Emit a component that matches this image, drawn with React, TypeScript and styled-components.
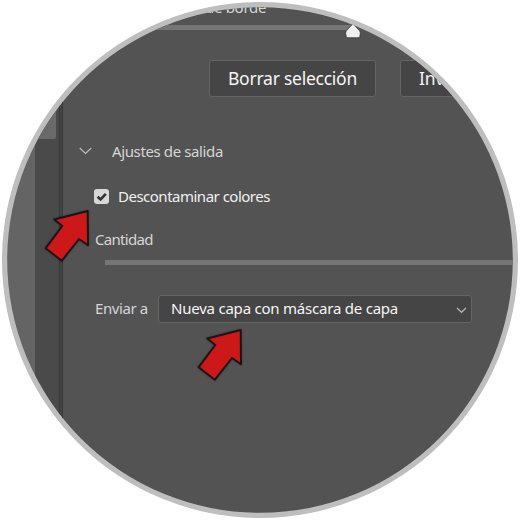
import React from 'react'
import styled, { createGlobalStyle } from 'styled-components'

const GlobalStyle = createGlobalStyle`
  * {
    box-sizing: border-box;
  }

  body {
    margin: 0;
    background: #ffffff;
    font-family: 'Noto Sans', 'Open Sans', sans-serif;
  }
`

const Page = styled.main`
  width: 520px;
  height: 520px;
  padding: 2px;
  overflow: hidden;
`

const Ring = styled.div`
  width: 516px;
  height: 516px;
  border-radius: 50%;
  background: #bebebe;
`

const Lens = styled.div`
  position: relative;
  display: flex;
  height: 516px;
  overflow: hidden;
  clip-path: circle(252.8px);
`

const Canvas = styled.div`
  flex: none;
  width: 33px;
  background: #646464;
`

const Scrollbar = styled.div`
  flex: none;
  width: 24px;
  padding-right: 3px;
  background: #4a4a4a;
`

const ScrollThumb = styled.div`
  height: 137px;
  border-radius: 0 0 2px 2px;
  background: #6a6a6a;
`

const Divider = styled.div`
  flex: none;
  width: 4px;
  border: solid #383838;
  border-width: 0 1px;
  background: #444444;
`

const Panel = styled.section`
  flex: none;
  width: 455px;
  display: flex;
  flex-direction: column;
  background: #535353;
`

const Text = styled.span<{ size?: number; spacing?: number; color?: string }>`
  color: ${({ color }) => color || '#d6d6d6'};
  font-size: ${({ size }) => size || 15}px;
  line-height: 20px;
  letter-spacing: ${({ spacing }) => spacing || 0}px;
  white-space: nowrap;
`

const EdgeLabel = styled.div`
  display: flex;
  height: 23px;
  padding-left: 142px;

  ${Text} {
    margin-top: -5px;
  }
`

const Track = styled.div<{ indent?: number; length?: number }>`
  flex: none;
  position: relative;
  height: 5px;
  width: ${({ length }) => (length ? `${length}px` : 'auto')};
  margin-left: ${({ indent }) => indent || 0}px;
  background: #757575;
`

const Handle = styled.svg`
  position: absolute;
  top: -2px;
  right: -8px;
`

const Buttons = styled.div`
  display: flex;
  gap: 24px;
  margin: 30px 0 0 146px;
`

const Button = styled.button`
  flex: none;
  width: 167px;
  height: 37px;
  padding: 0 0 0 18px;
  border: 1px solid #656565;
  border-radius: 3px;
  background: #454545;
  font-family: inherit;
  text-align: left;
`

const SectionHeader = styled.div`
  display: flex;
  align-items: center;
  gap: 20px;
  height: 20px;
  margin: 44px 0 0 16px;
`

const CheckRow = styled.label`
  display: flex;
  align-items: center;
  gap: 9px;
  height: 20px;
  margin: 25px 0 0 31px;
`

const Checkbox = styled.span`
  display: flex;
  width: 15px;
  height: 15px;
  border-radius: 3px;
  background: #d8d8d8;
`

const AmountLabel = styled.div`
  display: flex;
  height: 20px;
  margin: 23px 0 11px 32px;
`

const OutputRow = styled.div`
  display: flex;
  align-items: center;
  height: 28px;
  margin: 30px 0 0 32px;

  ${Text} {
    margin-top: -2px;
  }
`

const OutputLabel = styled.div`
  display: flex;
  width: 63px;
`

const Select = styled.div`
  display: flex;
  align-items: center;
  justify-content: space-between;
  width: 314px;
  height: 28px;
  padding: 0 4px 0 12px;
  border: 1px solid #656565;
  border-radius: 3px;
  background: #454545;

  svg {
    margin-top: 2px;
  }
`

const Pointer = styled.svg<{ x: number; y: number }>`
  position: absolute;
  left: ${({ x }) => x}px;
  top: ${({ y }) => y}px;
  filter: drop-shadow(0 0 1px rgba(0, 0, 0, 0.3));
`

const Arrow: React.FC<{ x: number; y: number }> = ({ x, y }) => (
  <Pointer x={x} y={y} width="48" height="56" viewBox="0 0 48 56">
    <path
      d="M44.7 3 11.3 11.5 19.3 18 2.7 40.2 18.7 52.8 36 31 45 37.3Z"
      fill="#cc1818"
      stroke="#1c1414"
      strokeWidth="2"
      strokeLinejoin="round"
    />
  </Pointer>
)

const App: React.FC = () => (
  <>
    <GlobalStyle />
    <Page>
      <Ring>
        <Lens>
          <Canvas />
          <Scrollbar>
            <ScrollThumb />
          </Scrollbar>
          <Divider />
          <Panel>
            <EdgeLabel>
              <Text spacing={-0.3}>de borde</Text>
            </EdgeLabel>
            <Track length={290}>
              <Handle width="16" height="17" viewBox="0 0 16 17">
                <path
                  d="M8 .8 14.4 7.5Q15.5 8.7 15.3 10.5L14.8 13.5Q14.5 14.8 13 14.8H3Q1.5 14.8 1.2 13.5L.7 10.5Q.5 8.7 1.6 7.5Z"
                  fill="#f0f0f0"
                  stroke="#333333"
                  strokeWidth="0.8"
                />
              </Handle>
            </Track>
            <Buttons>
              <Button>
                <Text size={17.5} spacing={-0.25} color="#f5f5f5">
                  Borrar selección
                </Text>
              </Button>
              <Button>
                <Text size={17.5} spacing={-0.25} color="#f5f5f5">
                  Invertir
                </Text>
              </Button>
            </Buttons>
            <SectionHeader>
              <svg width="13" height="8" viewBox="0 0 13 8">
                <path d="M.7 1 6.5 6.5 12.3 1" fill="none" stroke="#bdbdbd" strokeWidth="1.1" />
              </svg>
              <Text spacing={-0.38}>Ajustes de salida</Text>
            </SectionHeader>
            <CheckRow>
              <Checkbox>
                <svg width="15" height="15" viewBox="0 0 15 15">
                  <path d="M3.6 7.8 6.6 10.5 11.8 4.8" fill="none" stroke="#333333" strokeWidth="2.6" />
                </svg>
              </Checkbox>
              <Text spacing={-0.5} color="#f0f0f0">
                Descontaminar colores
              </Text>
            </CheckRow>
            <AmountLabel>
              <Text spacing={-0.7}>Cantidad</Text>
            </AmountLabel>
            <Track indent={42} />
            <OutputRow>
              <OutputLabel>
                <Text spacing={-0.4}>Enviar a</Text>
              </OutputLabel>
              <Select>
                <Text spacing={-0.22} color="#f5f5f5">
                  Nueva capa con máscara de capa
                </Text>
                <svg width="11" height="7" viewBox="0 0 11 7">
                  <path d="M1 1 5.5 5.3 10 1" fill="none" stroke="#b5b5b5" strokeWidth="1.2" />
                </svg>
              </Select>
            </OutputRow>
          </Panel>
          <Arrow x={41} y={206} />
          <Arrow x={194} y={325} />
        </Lens>
      </Ring>
    </Page>
  </>
)

export default App
